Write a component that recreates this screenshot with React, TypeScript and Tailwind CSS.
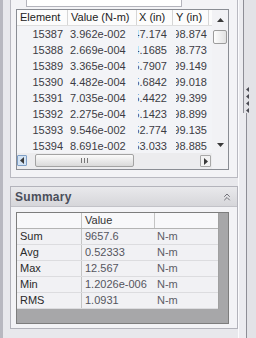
import { ChevronsUp } from 'lucide-react'

const ROWS = [
  ['15387', '3.962e-002', '47.174', '98.874'],
  ['15388', '2.669e-004', '4.1685', '98.773'],
  ['15389', '3.365e-004', '5.7907', '99.149'],
  ['15390', '4.482e-004', '5.6842', '99.018'],
  ['15391', '7.035e-004', '5.4422', '99.399'],
  ['15392', '2.275e-004', '5.1423', '98.899'],
  ['15393', '9.546e-002', '52.774', '99.135'],
  ['15394', '8.691e-002', '53.033', '98.885'],
]

const SUMMARY = [
  ['Sum', '9657.6'],
  ['Avg', '0.52333'],
  ['Max', '12.567'],
  ['Min', '1.2026e-006'],
  ['RMS', '1.0931'],
]

function Arrow({ dir, small }: { dir: 'up' | 'down' | 'left' | 'right'; small?: boolean }) {
  if (small) {
    return (
      <svg width={3} height={5} className="block">
        <polygon points="3,0 3,5 0,2.5" fill="#4a4a52" />
      </svg>
    )
  }
  const pts = {
    up: '0,4 7,4 3.5,0',
    down: '0,0 7,0 3.5,4',
    left: '4,0 4,7 0,3.5',
    right: '0,0 0,7 4,3.5',
  }[dir]
  const vertical = dir === 'up' || dir === 'down'
  return (
    <svg width={vertical ? 7 : 4} height={vertical ? 4 : 7} className="block">
      <polygon points={pts} fill="#3a3a3a" />
    </svg>
  )
}

function ResultsTable() {
  return (
    <div className="ml-[5px] mt-[2px] w-[213px] h-[161px] border border-[#8a8d94] flex bg-[#f3f4f7]">
      {/* grid + horizontal scrollbar */}
      <div className="w-[195px] flex flex-col">
        <div className="h-[16px] flex bg-[#fcfcfc] border-b border-[#dedede] text-[#222]">
          <div className="w-[51px] border-r border-[#d6d6d6] pl-[3px] leading-[15px]">Element</div>
          <div className="w-[69px] border-r border-[#d6d6d6] pl-[3px] leading-[15px] whitespace-nowrap overflow-hidden">Value (N-m)</div>
          <div className="w-[36px] border-r border-[#d6d6d6] pl-[2px] leading-[15px] whitespace-nowrap overflow-hidden">X (in)</div>
          <div className="w-[36px] border-r border-[#d6d6d6] pl-[3px] leading-[15px] whitespace-nowrap overflow-hidden">Y (in)</div>
          <div className="flex-1" />
        </div>
        <div className="h-[127px] overflow-hidden text-[#3c3c44]">
          {ROWS.map((r) => (
            <div key={r[0]} className="h-[16px] flex leading-[16px] whitespace-nowrap">
              <div className="w-[51px] text-right pr-[5px]">{r[0]}</div>
              <div className="w-[69px] pl-[2px] overflow-hidden">{r[1]}</div>
              <div className="w-[36px] flex justify-end overflow-hidden pl-[1px] pr-[6px]">
                <div className="overflow-hidden flex justify-end w-full">
                  <span className="shrink-0">{r[2]}</span>
                </div>
              </div>
              <div className="w-[36px] flex justify-end overflow-hidden pl-[3px] pr-[2px]">
                <div className="overflow-hidden flex justify-end w-full">
                  <span className="shrink-0">{r[3]}</span>
                </div>
              </div>
            </div>
          ))}
        </div>
        <div className="h-[16px] flex items-start bg-[#ececee]">
          <div className="mt-[2px] w-[10px] h-[11px] border border-[#7f9fc6] bg-[#d3e3f4] rounded-[1px] flex items-center justify-center">
            <Arrow dir="left" />
          </div>
          <div className="ml-[8px] mt-[1px] w-[99px] h-[13px] border border-[#a3a3a3] rounded-[2px] bg-gradient-to-b from-[#fbfbfb] to-[#dadada] flex items-center justify-center gap-[2px]">
            <div className="w-px h-[5px] bg-[#777]" />
            <div className="w-px h-[5px] bg-[#777]" />
            <div className="w-px h-[5px] bg-[#777]" />
          </div>
          <div className="ml-[66px] mt-[2px] w-[11px] h-[12px] border border-[#a8a8a8] bg-[#f2f2f2] rounded-[1px] flex items-center justify-center">
            <Arrow dir="right" />
          </div>
        </div>
      </div>
      {/* vertical scrollbar + corner */}
      <div className="w-[16px] flex flex-col">
        <div className="h-[143px] flex flex-col bg-[#f2f2f5]">
          <div className="h-[20px] flex items-center justify-center">
            <Arrow dir="up" />
          </div>
          <div className="ml-px w-[14px] h-[14px] border border-[#9c9c9c] rounded-[2px] bg-gradient-to-r from-[#fdfdfd] to-[#e2e2e2]" />
          <div className="flex-1" />
          <div className="h-[16px] flex items-start justify-center pt-[6px]">
            <Arrow dir="down" />
          </div>
        </div>
        <div className="flex-1 bg-[#f2f2f5]" />
      </div>
    </div>
  )
}

function SummaryTable() {
  return (
    <div className="ml-[5px] w-[213px] h-[112px] border border-[#7d7d7d] bg-[#a7a7a9] flex flex-col">
      <div className="w-[202px] bg-[#f1f1f4] border-r border-[#a0a0a0]">
        <div className="h-[16px] flex bg-[#f8f8fa] border-b border-[#b4b4b4] text-[#333]">
          <div className="w-[65px] border-r border-[#c4c4c4]" />
          <div className="w-[73px] border-r border-[#c4c4c4] pl-[3px] leading-[15px]">Value</div>
          <div className="flex-1" />
        </div>
        {SUMMARY.map((s) => (
          <div key={s[0]} className="h-[16px] flex border-b border-[#dcdcdf] leading-[15px] whitespace-nowrap">
            <div className="w-[65px] border-r border-[#c4c4c4] pl-[3px] text-[#2a2a2a]">{s[0]}</div>
            <div className="w-[73px] pl-[3px] text-[#55555e] overflow-hidden">{s[1]}</div>
            <div className="flex-1 pl-[2px] text-[#5c5c66]">N-m</div>
          </div>
        ))}
      </div>
    </div>
  )
}

export default function App() {
  return (
    <div
      className="w-[256px] h-[338px] overflow-hidden flex bg-[#e8e8ec] text-[11px]"
      style={{ fontFamily: '"Liberation Sans", Arial, sans-serif' }}
    >
      {/* left edge */}
      <div className="w-[3px] shrink-0 bg-[#b8b8c0]" />

      {/* main column */}
      <div className="w-[235px] shrink-0 pl-[7px] flex flex-col">
        {/* results group */}
        <div className="w-[228px] h-[178px] border-x border-b border-[#b9b9c1] bg-[#f3f3f6]">
          <div className="ml-[15px] w-[156px] h-[7px] bg-white border-x border-b border-[#b4b4bc]" />
          <ResultsTable />
        </div>

        {/* summary group */}
        <div className="mt-[8px] w-[228px] h-[143px] border border-[#b3b3bb] bg-[#f3f3f6] flex flex-col">
          <div className="h-[20px] border-b border-[#c2c2c8] bg-gradient-to-b from-[#e9e9ec] to-[#d6d6da] flex items-center justify-between pl-[4px] pr-[4px]">
            <span className="text-[12px] font-bold text-[#4a4e5a] tracking-[0.3px]">Summary</span>
            <ChevronsUp size={12} strokeWidth={1.6} color="#55555e" />
          </div>
          <div className="pt-[5px]">
            <SummaryTable />
          </div>
        </div>
      </div>

      {/* right splitter */}
      <div className="flex-1 border-l border-[#fbfbfd] bg-[#ececf0] flex flex-col">
        <div className="h-[86px] ml-[4px] border-l border-[#8e8e96] bg-[#e3e3e7]" />
        <div className="h-[27px] ml-[4px] border-l border-[#8e8e96] bg-[#e3e3e7] flex flex-col items-center justify-center gap-[2px] pr-[6px]">
          <Arrow dir="left" small />
          <Arrow dir="left" small />
          <Arrow dir="left" small />
          <Arrow dir="left" small />
        </div>
        <div className="flex-1 ml-[7px] border-l border-[#8e8e96] bg-[#e3e3e7]" />
      </div>
    </div>
  )
}
